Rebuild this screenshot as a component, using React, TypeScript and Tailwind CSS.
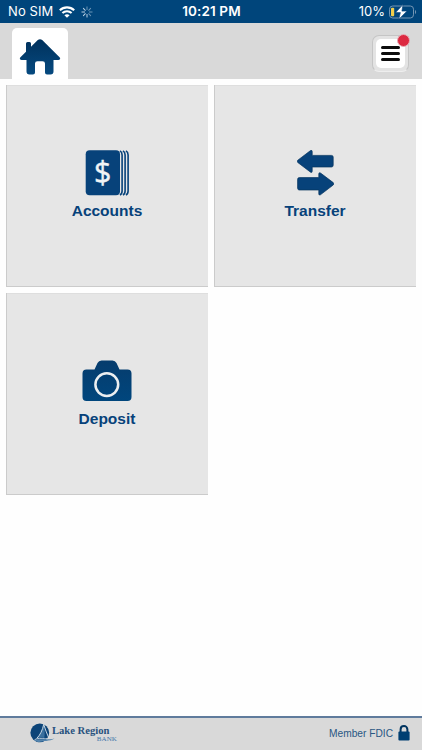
import type { ReactNode } from 'react'

const NAVY = '#07427a'

const WifiIcon = () => (
    <svg width="16" height="12" viewBox="0 0 16 12" fill="none" stroke="#fff" strokeWidth="2.1">
        <path d="M0.8 4.2C4.8 0.4 11.2 0.4 15.2 4.2" />
        <path d="M3.4 7C6 4.6 10 4.6 12.6 7" />
        <path d="M8 11.8L5.4 9.2C6.8 7.9 9.2 7.9 10.6 9.2Z" fill="#fff" stroke="none" />
    </svg>
)

const SPOKES = [0, 45, 90, 135, 180, 225, 270, 315]

const SpinnerIcon = () => (
    <svg width="12" height="12" viewBox="0 0 12 12" stroke="#c5d8e9" strokeWidth="1" strokeLinecap="round">
        {SPOKES.map((angle) => (
            <path key={angle} d="M6 0.9V3.6" transform={`rotate(${angle} 6 6)`} opacity={angle < 180 ? 0.55 : 0.95} />
        ))}
    </svg>
)

const BatteryIcon = () => (
    <svg width="28" height="16" viewBox="0 0 28 16">
        <rect x="0.5" y="2" width="24" height="12" rx="3.2" fill="none" stroke="#7496b4" />
        <path d="M26 6C27.5 6.5 27.5 9.5 26 10Z" fill="#7496b4" />
        <rect x="2" y="3.8" width="3.2" height="8.4" rx="1" fill="#f2ce4b" />
        <path d="M14 0.6L6.6 8.6H11.4L9.8 15.3L18 7.1H12.9Z" fill="#fff" stroke={NAVY} strokeWidth="0.6" />
    </svg>
)

const HomeIcon = () => (
    <svg width="42" height="36" viewBox="0 0 42 36">
        <defs>
            <linearGradient id="home" x1="0" y1="0" x2="0" y2="1">
                <stop offset="0" stopColor="#00315c" />
                <stop offset="1" stopColor="#064a80" />
            </linearGradient>
        </defs>
        <path
            d="M18.8 1.1Q21 -0.6 23.2 1.1L40.8 18.6Q42 20.8 39.5 21H34.5V32.6Q34.5 35.5 31.5 35.5H28Q26 35.5 26 33.5V24.5Q26 22.3 23.5 22.3H18.5Q16 22.3 16 24.5V33.5Q16 35.5 14 35.5H10.5Q7.5 35.5 7.5 32.6V21H2.5Q0 20.8 1.2 18.6L7 12.7V4.5Q7 3 8.5 3H10.5Q12 3 12 4.5V7.8Z"
            fill="url(#home)"
        />
    </svg>
)

const AccountsIcon = () => (
    <svg width="44" height="46" viewBox="-0.7 0 44 46">
        <rect x="0" y="0.3" width="34.3" height="45" rx="4" fill={NAVY} />
        <g fill="none" stroke={NAVY} strokeWidth="1.6">
            <path d="M34.2 0.9Q36.4 2 36.4 5V41Q36.4 44 34.2 45" />
            <path d="M37.2 0.9Q39.4 2 39.4 5V41Q39.4 44 37.2 45" />
            <path d="M40.2 0.9Q42.4 2 42.4 5V41Q42.4 44 40.2 45" />
        </g>
        <text x="17" y="33.2" textAnchor="middle" fontFamily="Open Sans" fontSize="30.5" fontWeight="400" fill="#f1f3f5" stroke="#f1f3f5" strokeWidth="0.4">
            $
        </text>
    </svg>
)

const TransferIcon = () => (
    <svg width="37" height="46" viewBox="0 0 37 46" fill={NAVY} stroke="#06345d" strokeWidth="0.7">
        <path d="M0.8 10.2L13.5 0.6Q15.2 -0.2 15.2 1.5V5.4H34.5Q36.2 5.4 36.2 7.1V15.3Q36.2 17 34.5 17H15.2V21.3Q15.2 23 13.6 22.2L0.8 12.5Q-0.4 11.4 0.8 10.2Z" />
        <path d="M36.2 32.6L23.5 23Q21.8 22.2 21.8 23.9V27.6H2.3Q0.6 27.6 0.6 29.3V38.3Q0.6 40 2.3 40H21.8V43.9Q21.8 45.6 23.4 44.8L36.2 35Q37.3 33.8 36.2 32.6Z" />
    </svg>
)

const CameraIcon = () => (
    <svg width="50" height="42" viewBox="0 0 50 42">
        <defs>
            <linearGradient id="camera" x1="0" y1="0" x2="0" y2="1">
                <stop offset="0" stopColor="#063c6d" />
                <stop offset="1" stopColor="#00467d" />
            </linearGradient>
        </defs>
        <path
            d="M4 9.5H12.5L15.5 3Q16.8 0.5 19.5 0.5H30.5Q33.2 0.5 34.5 3L37.5 9.5H45.5Q49.5 9.5 49.5 13.5V37Q49.5 41 45.5 41H4.5Q0.5 41 0.5 37V13.5Q0.5 9.5 4.5 9.5Z"
            fill="url(#camera)"
        />
        <circle cx="24.8" cy="24.6" r="11.4" fill="none" stroke="#eceff1" strokeWidth="2.5" />
    </svg>
)

const SailLogo = () => (
    <svg width="26" height="20" viewBox="0 0 26 20">
        <circle cx="9.8" cy="9.8" r="9.4" fill="#0c4478" />
        <path d="M13.7 1.3C12.4 7.4 10.3 11.8 6.8 15.3C9.6 14.4 12 14.3 14.3 15.1C15 10.3 14.8 5.2 13.7 1.3Z" fill="#3b709e" />
        <path d="M13.7 1.3C12.4 7.4 10.3 11.8 6.8 15.3M13.7 1.3C15.2 6 16.7 10.4 18.5 14.3" fill="none" stroke="#dce6ee" strokeWidth="0.9" />
        <path d="M4 17.6C9 14.5 14 17.8 24.5 15.5C19.5 18.6 13 17.5 8.5 19.3Z" fill="#5484ad" />
        <path d="M4.5 16.8C9 14.1 13.5 16.2 17 15.6" fill="none" stroke="#dce6ee" strokeWidth="0.8" />
    </svg>
)

const LockIcon = () => (
    <svg width="12" height="16" viewBox="0 0 12 16">
        <path d="M2.6 8V4.5C2.6 -0.1 9.4 -0.1 9.4 4.5V8" fill="none" stroke="#00345f" strokeWidth="2" />
        <rect x="0.4" y="6.6" width="11.2" height="9" rx="1" fill="#003f72" />
    </svg>
)

interface TileProps {
    label: string
    icon: ReactNode
}

const Tile = ({ label, icon }: TileProps) => (
    <button className="flex h-[202px] w-[202px] flex-col items-center bg-[#e6e6e6] pt-[65px] shadow-[inset_1px_-1px_0_#cbcbcb,inset_0_1px_0_#dedede]">
        <span className="flex h-[46px] items-center">{icon}</span>
        <span className="mt-[6px] text-[15.5px] font-bold leading-[18px] text-[#07427a]">{label}</span>
    </button>
)

export default function App() {
    return (
        <div className="flex h-[750px] w-[422px] flex-col overflow-hidden bg-[#fefefe] font-['Liberation_Sans',sans-serif]">
            <div className="grid h-[23px] grid-cols-[1fr_auto_1fr] items-center bg-[#00457b] pl-2 pr-[5px] font-['Inter',sans-serif] text-[13px] leading-[23px] text-white">
                <div className="flex items-center gap-[6px]">
                    <span className="w-[45px] whitespace-nowrap tracking-[0.1px]">No SIM</span>
                    <WifiIcon />
                    <SpinnerIcon />
                </div>
                <span className="relative -left-[1px] text-[13.5px] font-semibold tracking-[0.1px]">10:21 PM</span>
                <div className="flex items-center justify-end gap-[4px]">
                    <span>10%</span>
                    <BatteryIcon />
                </div>
            </div>

            <header className="flex h-14 items-start justify-between bg-[#d9d9d9] pl-3 pr-[13px]">
                <div className="mt-[5px] flex h-[51px] w-14 justify-center rounded-t-[5px] bg-white pt-[11px]">
                    <HomeIcon />
                </div>
                <button aria-label="Menu" className="relative mt-[12px] flex h-[37px] w-[37px] items-center justify-center rounded-[7px] border border-[#c5c5c5] border-b-[#eeeeee] bg-[#e3e3e3]">
                    <span className="flex h-[29px] w-[29px] flex-col items-center justify-center gap-[3px] rounded-[5px] bg-white">
                        <span className="h-[3px] w-[19px] rounded-full bg-[#0c0c0c]" />
                        <span className="h-[3px] w-[19px] rounded-full bg-[#0c0c0c]" />
                        <span className="h-[3px] w-[19px] rounded-full bg-[#0c0c0c]" />
                    </span>
                    <span className="absolute -right-[2px] -top-[2px] h-[13px] w-[13px] rounded-full border border-[#e8aeb6] bg-[#dc2940]" />
                </button>
            </header>

            <main className="grid flex-1 grid-cols-[202px_202px] content-start gap-[6px] px-[6px] pt-[5.5px]">
                <Tile label="Accounts" icon={<AccountsIcon />} />
                <Tile label="Transfer" icon={<TransferIcon />} />
                <Tile label="Deposit" icon={<CameraIcon />} />
            </main>

            <footer className="flex h-[34px] items-center justify-between border-t-2 border-[#5f7b9c] bg-[#d9d9d9] pb-[2px] pl-[30px] pr-[12px]">
                <div className="flex items-center">
                    <SailLogo />
                    <div className="-ml-[4px] flex w-[65px] flex-col pt-px font-['Liberation_Serif',serif]">
                        <span className="whitespace-nowrap text-[10.6px] font-bold leading-[10px] text-[#28527e]">Lake Region</span>
                        <span className="self-end text-[7px] leading-[6px] tracking-[0.1px] text-[#3f76a9]">BANK</span>
                    </div>
                </div>
                <div className="flex items-center gap-[5px]">
                    <span className="pt-[2px] text-[10.2px] leading-4 text-[#295783]">Member FDIC</span>
                    <LockIcon />
                </div>
            </footer>
        </div>
    )
}
